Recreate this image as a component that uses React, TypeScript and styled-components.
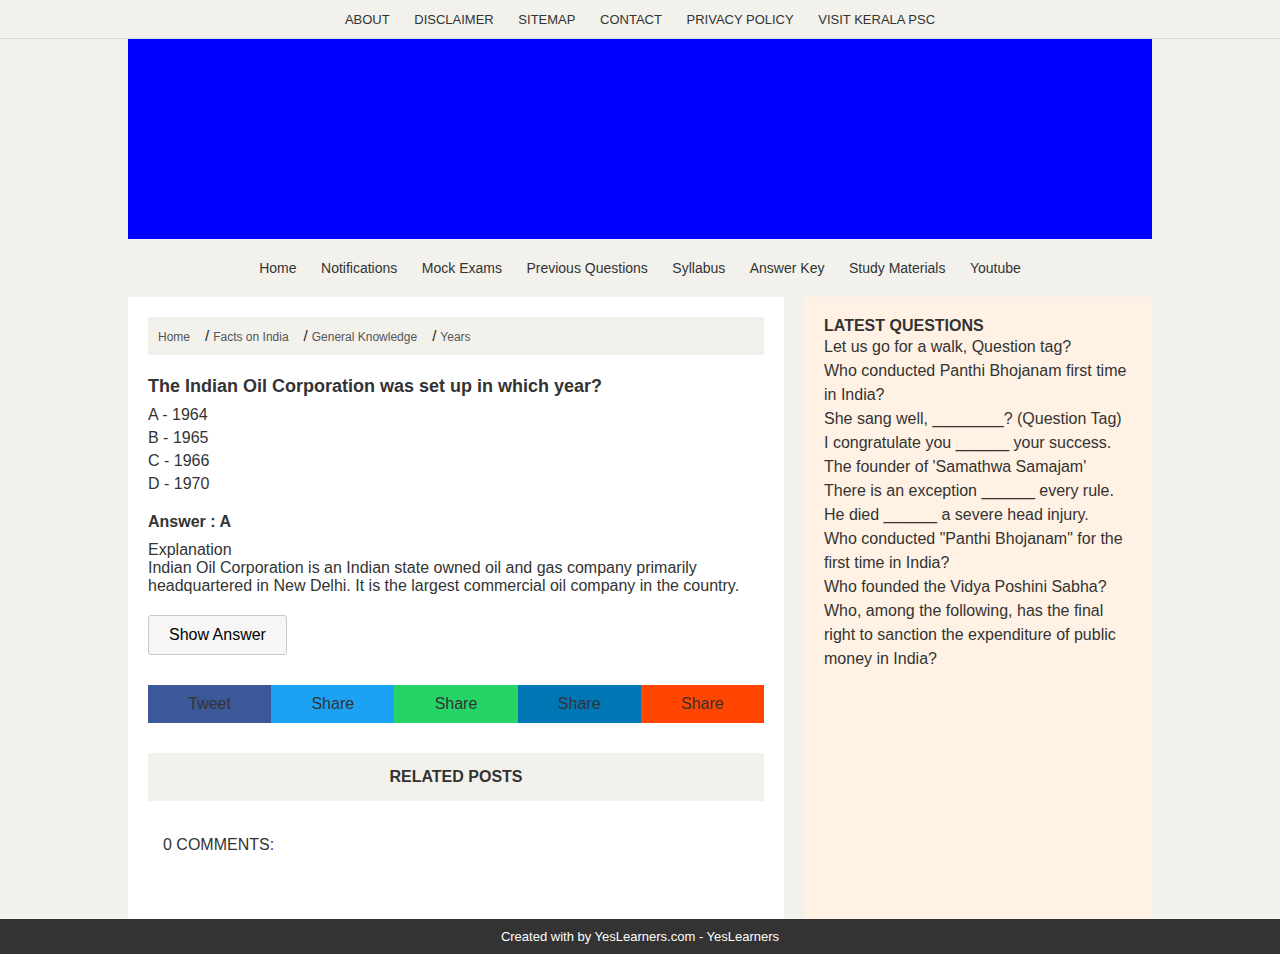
import React from "react";
import styled, { createGlobalStyle } from "styled-components";

const GlobalStyle = createGlobalStyle`
  html, body {
    margin: 0;
    padding: 0;
    background: #f2f1ec;
    font-family: "Liberation Sans", Arial, Helvetica, sans-serif;
    color: #333;
  }
  * { box-sizing: border-box; }
`;

const TopBar = styled.nav`
  height: 39px;
  border-bottom: 1px solid #dcdcd8;
  display: flex;
  justify-content: center;
  align-items: center;
`;

const TopLink = styled.a`
  font-size: 13px;
  color: #333;
  text-transform: uppercase;
  text-decoration: none;
  padding: 0 12.3px;
`;

const Container = styled.div`
  width: 1024px;
  margin: 0 auto;
`;

const Banner = styled.div`
  height: 200px;
  background: #0000ff;
`;

const MainNav = styled.nav`
  height: 58px;
  display: flex;
  justify-content: center;
  align-items: center;
`;

const NavLink = styled.a`
  font-size: 14px;
  color: #333;
  text-decoration: none;
  padding: 0 12.25px;
`;

const Columns = styled.div`
  display: flex;
  gap: 20px;
  align-items: stretch;
  padding-bottom: 40px;
`;

const Card = styled.main`
  width: 656px;
  background: #fff;
  padding: 20px 20px 80px;
`;

const Breadcrumb = styled.div`
  height: 38px;
  background: #f2f1ec;
  display: flex;
  align-items: center;
  padding: 2px 10px 0;
`;

const Crumb = styled.a<{ $first?: boolean }>`
  font-size: 12px;
  color: #555;
  text-decoration: none;
  margin-left: ${(p) => (p.$first ? "0" : "15px")};
  display: flex;
  align-items: center;
`;

const Slash = styled.span`
  font-size: 15px;
  color: #222;
  margin-right: 4px;
  position: relative;
  top: -2px;
`;

const Title = styled.h1`
  font-size: 18px;
  font-weight: bold;
  margin: 21px 0 7px;
  line-height: 20px;
  color: #333;
`;

const Option = styled.div`
  font-size: 16px;
  line-height: 23px;
`;

const Answer = styled.div`
  font-size: 16px;
  font-weight: bold;
  margin-top: 17px;
  line-height: 20px;
`;

const Explanation = styled.div`
  font-size: 16px;
  line-height: 18px;
  margin-top: 9px;
`;

const ShowButton = styled.button`
  margin-top: 20px;
  height: 40px;
  padding: 0 20px;
  font-family: "Liberation Sans", Arial, sans-serif;
  font-size: 16px;
  color: #000;
  background: #f6f6f6;
  border: 1px solid #c9c9c9;
  border-radius: 3px;
`;

const ShareBar = styled.div`
  margin-top: 30px;
  display: grid;
  grid-template-columns: repeat(5, 1fr);
`;

const ShareBtn = styled.a<{ $bg: string }>`
  height: 38px;
  display: flex;
  align-items: center;
  justify-content: center;
  background: ${(p) => p.$bg};
  color: #333;
  font-size: 16px;
  text-decoration: none;
`;

const Related = styled.div`
  margin-top: 30px;
  height: 48px;
  background: #f2f1ec;
  display: flex;
  align-items: center;
  justify-content: center;
  font-size: 16px;
  font-weight: bold;
  text-transform: uppercase;
`;

const Comments = styled.h4`
  margin: 35px 0 0;
  padding-left: 15px;
  font-size: 16px;
  font-weight: normal;
  text-transform: uppercase;
  line-height: 18px;
`;

const Sidebar = styled.aside`
  width: 348px;
  background: #fff2e4;
  padding: 20px;
`;

const SideTitle = styled.h2`
  margin: 0;
  font-size: 16px;
  font-weight: bold;
  line-height: 18px;
  text-transform: uppercase;
`;

const QList = styled.ul`
  list-style: none;
  margin: 0;
  padding: 0;
`;

const QItem = styled.li`
  font-size: 16px;
  line-height: 24px;
  color: #333;
`;

const Footer = styled.footer`
  position: fixed;
  left: 0;
  right: 0;
  bottom: 0;
  height: 35px;
  background: #333;
  color: #fff;
  font-size: 13px;
  display: flex;
  align-items: center;
  justify-content: center;
`;

const topLinks = ["About", "Disclaimer", "Sitemap", "Contact", "Privacy Policy", "Visit Kerala PSC"];
const navLinks = ["Home", "Notifications", "Mock Exams", "Previous Questions", "Syllabus", "Answer Key", "Study Materials", "Youtube"];
const crumbs = ["Facts on India", "General Knowledge", "Years"];
const options = ["A - 1964", "B - 1965", "C - 1966", "D - 1970"];
const shares = [
  { label: "Tweet", bg: "#3b5998" },
  { label: "Share", bg: "#1da1f2" },
  { label: "Share", bg: "#25d366" },
  { label: "Share", bg: "#0077b5" },
  { label: "Share", bg: "#ff4500" },
];
const questions = [
  "Let us go for a walk, Question tag?",
  "Who conducted Panthi Bhojanam first time in India?",
  "She sang well, ________? (Question Tag)",
  "I congratulate you ______ your success.",
  "The founder of 'Samathwa Samajam'",
  "There is an exception ______ every rule.",
  "He died ______ a severe head injury.",
  "Who conducted \"Panthi Bhojanam\" for the first time in India?",
  "Who founded the Vidya Poshini Sabha?",
  "Who, among the following, has the final right to sanction the expenditure of public money in India?",
];

export default function App() {
  return (
    <>
      <GlobalStyle />
      <TopBar>
        {topLinks.map((l) => (
          <TopLink key={l}>{l}</TopLink>
        ))}
      </TopBar>
      <Container>
        <Banner />
        <MainNav>
          {navLinks.map((l) => (
            <NavLink key={l}>{l}</NavLink>
          ))}
        </MainNav>
        <Columns>
          <Card>
            <Breadcrumb>
              <Crumb $first>Home</Crumb>
              {crumbs.map((c) => (
                <Crumb key={c}>
                  <Slash>/</Slash>
                  {c}
                </Crumb>
              ))}
            </Breadcrumb>
            <Title>The Indian Oil Corporation was set up in which year?</Title>
            {options.map((o) => (
              <Option key={o}>{o}</Option>
            ))}
            <Answer>Answer : A</Answer>
            <Explanation>
              Explanation
              <br />
              Indian Oil Corporation is an Indian state owned oil and gas company primarily headquartered in New Delhi. It is the largest commercial oil company in the country.
            </Explanation>
            <ShowButton>Show Answer</ShowButton>
            <ShareBar>
              {shares.map((s, i) => (
                <ShareBtn key={i} $bg={s.bg}>
                  {s.label}
                </ShareBtn>
              ))}
            </ShareBar>
            <Related>Related Posts</Related>
            <Comments>0 Comments:</Comments>
          </Card>
          <Sidebar>
            <SideTitle>Latest Questions</SideTitle>
            <QList>
              {questions.map((q) => (
                <QItem key={q}>{q}</QItem>
              ))}
            </QList>
          </Sidebar>
        </Columns>
      </Container>
      <Footer>Created with by YesLearners.com - YesLearners</Footer>
    </>
  );
}
